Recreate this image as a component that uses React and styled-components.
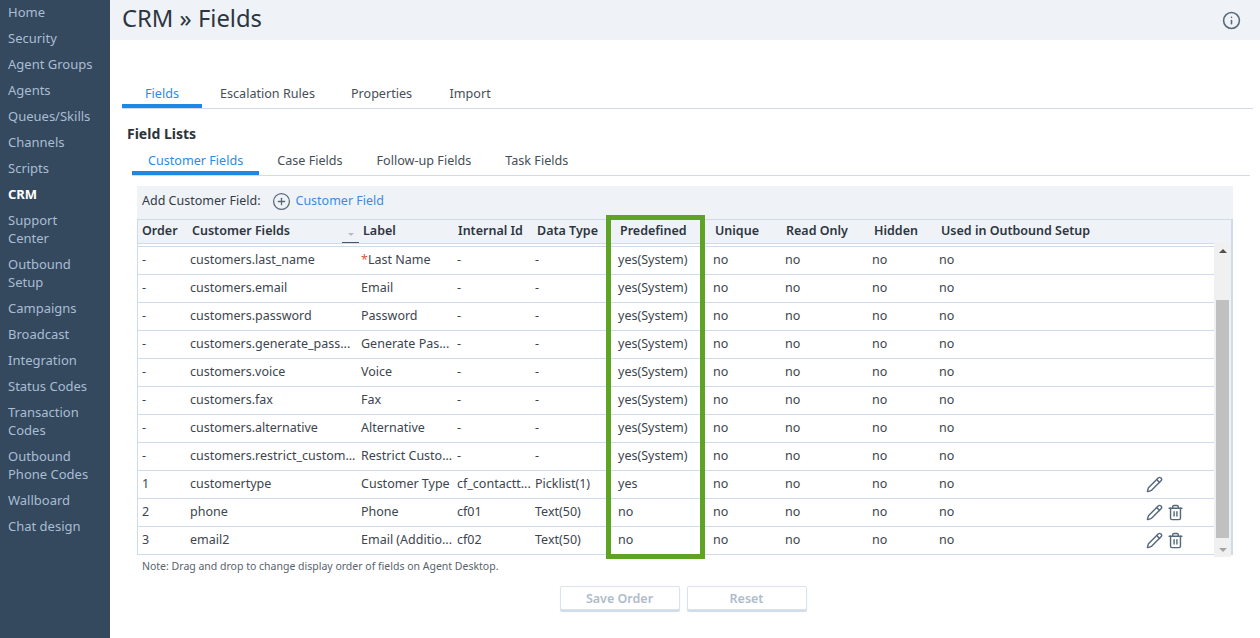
import React from "react";
import styled, { createGlobalStyle } from "styled-components";
import { Pencil, Trash2, Info, CirclePlus } from "lucide-react";

const Global = createGlobalStyle`
  html, body { margin: 0; padding: 0; height: 100%; overflow: hidden; background: #fff; }
  body { font-family: "Noto Sans", "Open Sans", sans-serif; color: #333c45; }
  #root { height: 100%; }
`;

const Page = styled.div`display: flex; height: 638px; width: 1260px; overflow: hidden;`;

const Sidebar = styled.nav`
  width: 110px; flex: none; background: #34495e; overflow: hidden;
  display: flex; flex-direction: column;
`;
const NavItem = styled.div`
  position: relative; padding: 4px 8px; font-size: 13px; line-height: 18px; width: 90px;
  box-sizing: content-box;
  color: ${p => (p.$active ? "#ffffff" : "#a9bdd3")};
  font-weight: ${p => (p.$active ? 700 : 400)};
  &:first-child { margin-top: -1px; }
  ${p => p.$active && `&::after { content: ""; position: absolute; right: -8px; top: 1px; width: 4px; height: 26px; background: #fbb11e; }`}
`;

const Main = styled.main`flex: 1; min-width: 0; display: flex; flex-direction: column;`;
const Header = styled.header`
  height: 40px; background: #eff3f8; display: flex; align-items: center; justify-content: space-between;
  padding: 0 19px 0 12px; flex: none;
`;
const Title = styled.h1`margin: 0 0 2px; font-size: 23.8px; font-weight: 400; color: #2d3640; line-height: 1;`;
const InfoIcon = styled(Info)`width: 19px; height: 19px; color: #59697a; stroke-width: 2;`;

const TabBar = styled.div`
  display: flex; border-bottom: 1px solid #cfdbe8; box-sizing: border-box; flex: none;
  gap: ${p => p.$sub ? "2px" : "0"};
  margin: ${p => p.$sub ? "0 10px 0 22px" : "38px 7px 0 12px"};
  height: ${p => p.$sub ? "30px" : "31px"};
`;
const Tab = styled.div`
  min-width: 80px; box-sizing: border-box; padding: 0 ${p => p.$sub ? 16 : 18}px; font-size: 12.6px; text-align: center;
  height: ${p => p.$sub ? "29px" : "30px"};
  line-height: ${p => p.$sub ? "30px" : "32px"};
  color: ${p => (p.$active ? "#2f8ae2" : "#454e57")};
  border-bottom: 4px solid ${p => (p.$active ? "#1e88e5" : "transparent")};
`;
const SectionTitle = styled.h2`
  margin: 16px 0 4px 17px; font-size: 14px; font-weight: 700; color: #2b333b; line-height: 17px; height: 17px;
`;

const Panel = styled.section`margin: 10px 27px 0 27px; display: flex; flex-direction: column;`;
const AddBar = styled.div`
  height: 33px; background: #eff3f8; display: flex; align-items: center; padding: 0 0 5px 5px;
  font-size: 12.5px; color: #333c45; box-sizing: border-box;
`;
const AddLink = styled.span`display: inline-flex; align-items: center; gap: 4px; margin-left: 12px; color: #3d8ae0;`;
const PlusIcon = styled(CirclePlus)`width: 19px; height: 19px; color: #5a6876; stroke-width: 1.6; position: relative; top: 1px;`;

const TableWrap = styled.div`
  position: relative; border: 1px solid #cfdbe8; border-right-width: 2px; height: 336px; box-sizing: border-box;
  background: #fff;
`;
const COLS = "48px 171px 96px 78px 83px 95px 72px 87px 67px 208px 72px";
const HeadRow = styled.div`
  display: grid; grid-template-columns: ${COLS}; height: 23px; background: #eff3f8;
  border-bottom: 1px solid #cfdbe8; font-size: 12.5px; font-weight: 600; color: #2d3640;
  line-height: 21px; box-sizing: content-box;
`;
const HeadCell = styled.div`
  position: relative; padding-left: ${p => p.$pad ?? 6}px; white-space: nowrap;
`;
const SortMark = styled.span`
  position: absolute; right: -2px; bottom: 0; width: 17px; height: 14px; border-bottom: 1px solid #4a5763;
  &::before { content: ""; position: absolute; left: 6px; top: 5px; border: 3px solid transparent; border-top: 3px solid #b5bcc4; }
`;
const Body = styled.div`position: relative; height: 311px; margin-top: 2px; padding-right: 17px;`;
const Row = styled.div`
  display: grid; grid-template-columns: ${COLS}; height: 28px; box-sizing: border-box;
  border-top: 1px solid #cfdbe8; font-size: 12.5px; color: #3c454e; line-height: 25px;
`;
const Cell = styled.div`padding-left: 4px; white-space: nowrap;`;
const Req = styled.span`color: #e5533d;`;
const Actions = styled.div`display: flex; align-items: center; gap: 4px; padding-left: 3px; color: #56697b;`;
const IconBtn = styled.span`
  display: inline-flex; width: 17px; height: 17px; svg { width: 17px; height: 17px; stroke-width: 2; }
`;
const Scrollbar = styled.div`
  position: absolute; right: 0; top: -3px; bottom: 0; width: 17px; background: #f0f0f0;
  display: flex; flex-direction: column; align-items: center; justify-content: space-between;
`;
const Arrow = styled.span`
  margin: 6px 0 5px; width: 0; height: 0; border-left: 4px solid transparent; border-right: 4px solid transparent;
  ${p => p.$up ? "border-bottom: 4px solid #505050;" : "border-top: 4px solid #a3a3a3;"}
`;
const Thumb = styled.div`width: 13px; height: 238px; background: #c0c0c0; margin-top: 37px;`;
const Highlight = styled.div`
  position: absolute; left: 468px; top: -5px; width: 99px; height: 344px; box-sizing: border-box;
  border: 5px solid #5fa324; pointer-events: none;
`;
const Note = styled.p`margin: 4px 0 0 5px; font-size: 10.5px; line-height: 15px; color: #59636d;`;
const Buttons = styled.div`display: flex; justify-content: center; gap: 7px; margin-top: 12px; padding-right: 4px;`;
const Button = styled.button`
  width: 120px; height: 24px; font: inherit; font-size: 12.5px; font-weight: 600; color: #aebccb; background: #fff;
  border: 1px solid #dbe3ec; border-radius: 2px; box-shadow: 0 2px 1px #cfdbe8; padding: 0;
`;

const nav = [
  "Home", "Security", "Agent Groups", "Agents", "Queues/Skills", "Channels", "Scripts", "CRM",
  "Support Center", "Outbound Setup", "Campaigns", "Broadcast", "Integration", "Status Codes",
  "Transaction Codes", "Outbound Phone Codes", "Wallboard", "Chat design",
];
const heads = [
  ["Order", 4], ["Customer Fields", 6], ["Label", 6], ["Internal Id", 5], ["Data Type", 6],
  ["Predefined", 6], ["Unique", 6], ["Read Only", 5], ["Hidden", 6], ["Used in Outbound Setup", 6],
];
const sys = (f, l) => ["-", f, l, "-", "-", "yes(System)"];
const rows = [
  sys("customers.last_name", "*Last Name"),
  sys("customers.email", "Email"),
  sys("customers.password", "Password"),
  sys("customers.generate_pass...", "Generate Pas..."),
  sys("customers.voice", "Voice"),
  sys("customers.fax", "Fax"),
  sys("customers.alternative", "Alternative"),
  sys("customers.restrict_custom...", "Restrict Custo..."),
  ["1", "customertype", "Customer Type", "cf_contactt...", "Picklist(1)", "yes"],
  ["2", "phone", "Phone", "cf01", "Text(50)", "no"],
  ["3", "email2", "Email (Additio...", "cf02", "Text(50)", "no"],
];

export default function App() {
  return (
    <Page>
      <Global />
      <Sidebar>
        {nav.map(n => <NavItem key={n} $active={n === "CRM"}>{n}</NavItem>)}
      </Sidebar>
      <Main>
        <Header>
          <Title>CRM » Fields</Title>
          <InfoIcon />
        </Header>
        <TabBar>
          {["Fields", "Escalation Rules", "Properties", "Import"].map((t, i) => <Tab key={t} $active={i === 0}>{t}</Tab>)}
        </TabBar>
        <SectionTitle>Field Lists</SectionTitle>
        <TabBar $sub>
          {["Customer Fields", "Case Fields", "Follow-up Fields", "Task Fields"].map((t, i) => <Tab key={t} $sub $active={i === 0}>{t}</Tab>)}
        </TabBar>
        <Panel>
          <AddBar>
            Add Customer Field:
            <AddLink><PlusIcon />Customer Field</AddLink>
          </AddBar>
          <TableWrap>
            <HeadRow>
              {heads.map(([h, pad]) => (
                <HeadCell key={h} $pad={pad}>{h}{h === "Customer Fields" && <SortMark />}</HeadCell>
              ))}
            </HeadRow>
            <Body>
              {rows.map(r => (
                <Row key={r[1]}>
                  {r.map((c, i) => (
                    <Cell key={i}>
                      {c.startsWith("*") ? <><Req>*</Req>{c.slice(1)}</> : c}
                    </Cell>
                  ))}
                  <Cell>no</Cell><Cell>no</Cell><Cell>no</Cell><Cell>no</Cell>
                  <Actions>
                    {r[0] !== "-" && <IconBtn><Pencil /></IconBtn>}
                    {(r[0] === "2" || r[0] === "3") && <IconBtn><Trash2 /></IconBtn>}
                  </Actions>
                </Row>
              ))}
              <Scrollbar>
                <Arrow $up />
                <Thumb />
                <Arrow />
              </Scrollbar>
            </Body>
            <Highlight />
          </TableWrap>
          <Note>Note: Drag and drop to change display order of fields on Agent Desktop.</Note>
          <Buttons>
            <Button disabled>Save Order</Button>
            <Button disabled>Reset</Button>
          </Buttons>
        </Panel>
      </Main>
    </Page>
  );
}
